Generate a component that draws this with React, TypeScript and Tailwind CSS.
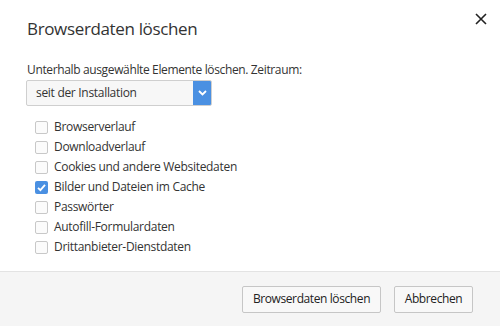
import React from "react";

const items: { label: string; checked: boolean }[] = [
  { label: "Browserverlauf", checked: false },
  { label: "Downloadverlauf", checked: false },
  { label: "Cookies und andere Websitedaten", checked: false },
  { label: "Bilder und Dateien im Cache", checked: true },
  { label: "Passwörter", checked: false },
  { label: "Autofill-Formulardaten", checked: false },
  { label: "Drittanbieter-Dienstdaten", checked: false },
];

function Box({ checked }: { checked: boolean }) {
  if (checked) {
    return (
      <span className="flex h-[13px] w-[13px] items-center justify-center rounded-[2px] bg-[#4a90e2]">
        <svg width="11" height="11" viewBox="0 0 11 11">
          <path d="M2 5.8 L4.4 8.2 L9 2.8" fill="none" stroke="#fff" strokeWidth="1.8" />
        </svg>
      </span>
    );
  }
  return <span className="block h-[13px] w-[13px] rounded-[2px] border border-[#c8c8c8] bg-[#fbfbfb]" />;
}

export default function App() {
  return (
    <div
      className="flex h-[326px] w-[500px] flex-col bg-white text-[#333]"
      style={{ fontFamily: '"Open Sans", "Noto Sans", sans-serif' }}
    >
      <div className="flex-1 pl-[27px] pr-[13px]">
        <div className="flex items-start justify-between pt-[16px]">
          <h1 className="text-[17px] leading-[26px] tracking-[-0.35px] text-[#333]">Browserdaten löschen</h1>
          <svg width="12" height="12" viewBox="0 0 12 12" className="mt-[-3px]">
            <path d="M1 1 L11 11 M11 1 L1 11" stroke="#222" strokeWidth="1.6" />
          </svg>
        </div>
        <div className="mt-[20px] text-[12px] leading-[16px] tracking-[-0.36px]">
          Unterhalb ausgewählte Elemente löschen. Zeitraum:
        </div>
        <div className="ml-[-1px] mt-[2px] flex h-[26px] w-[186px] overflow-hidden rounded-[2px] border border-[#cfcfcf] bg-[#f7f7f7]">
          <div className="flex flex-1 items-center pl-[9px] text-[12px] tracking-[-0.3px]">seit der Installation</div>
          <div className="flex w-[18px] items-center justify-center bg-[#4a90e2]">
            <svg width="9" height="6" viewBox="0 0 9 6">
              <path d="M1 1 L4.5 4.5 L8 1" fill="none" stroke="#fff" strokeWidth="1.8" />
            </svg>
          </div>
        </div>
        <div className="mt-[11px] flex flex-col pl-[8px]">
          {items.map((it) => (
            <div key={it.label} className="flex h-[20px] items-center gap-[6px] text-[12px] tracking-[-0.3px]">
              <Box checked={it.checked} />
              <span>{it.label}</span>
            </div>
          ))}
        </div>
      </div>
      <div className="flex h-[55px] items-center justify-end gap-[13px] border-t border-[#e3e3e3] bg-[#f5f5f5] pr-[27px]">
        <button className="h-[27px] w-[139px] rounded-[2px] border border-[#c6c6c6] bg-[#f8f8f8] text-[12px] tracking-[-0.4px] text-[#222]">
          Browserdaten löschen
        </button>
        <button className="h-[27px] w-[79px] rounded-[2px] border border-[#c6c6c6] bg-[#f8f8f8] text-[12px] tracking-[-0.4px] text-[#222]">
          Abbrechen
        </button>
      </div>
    </div>
  );
}
